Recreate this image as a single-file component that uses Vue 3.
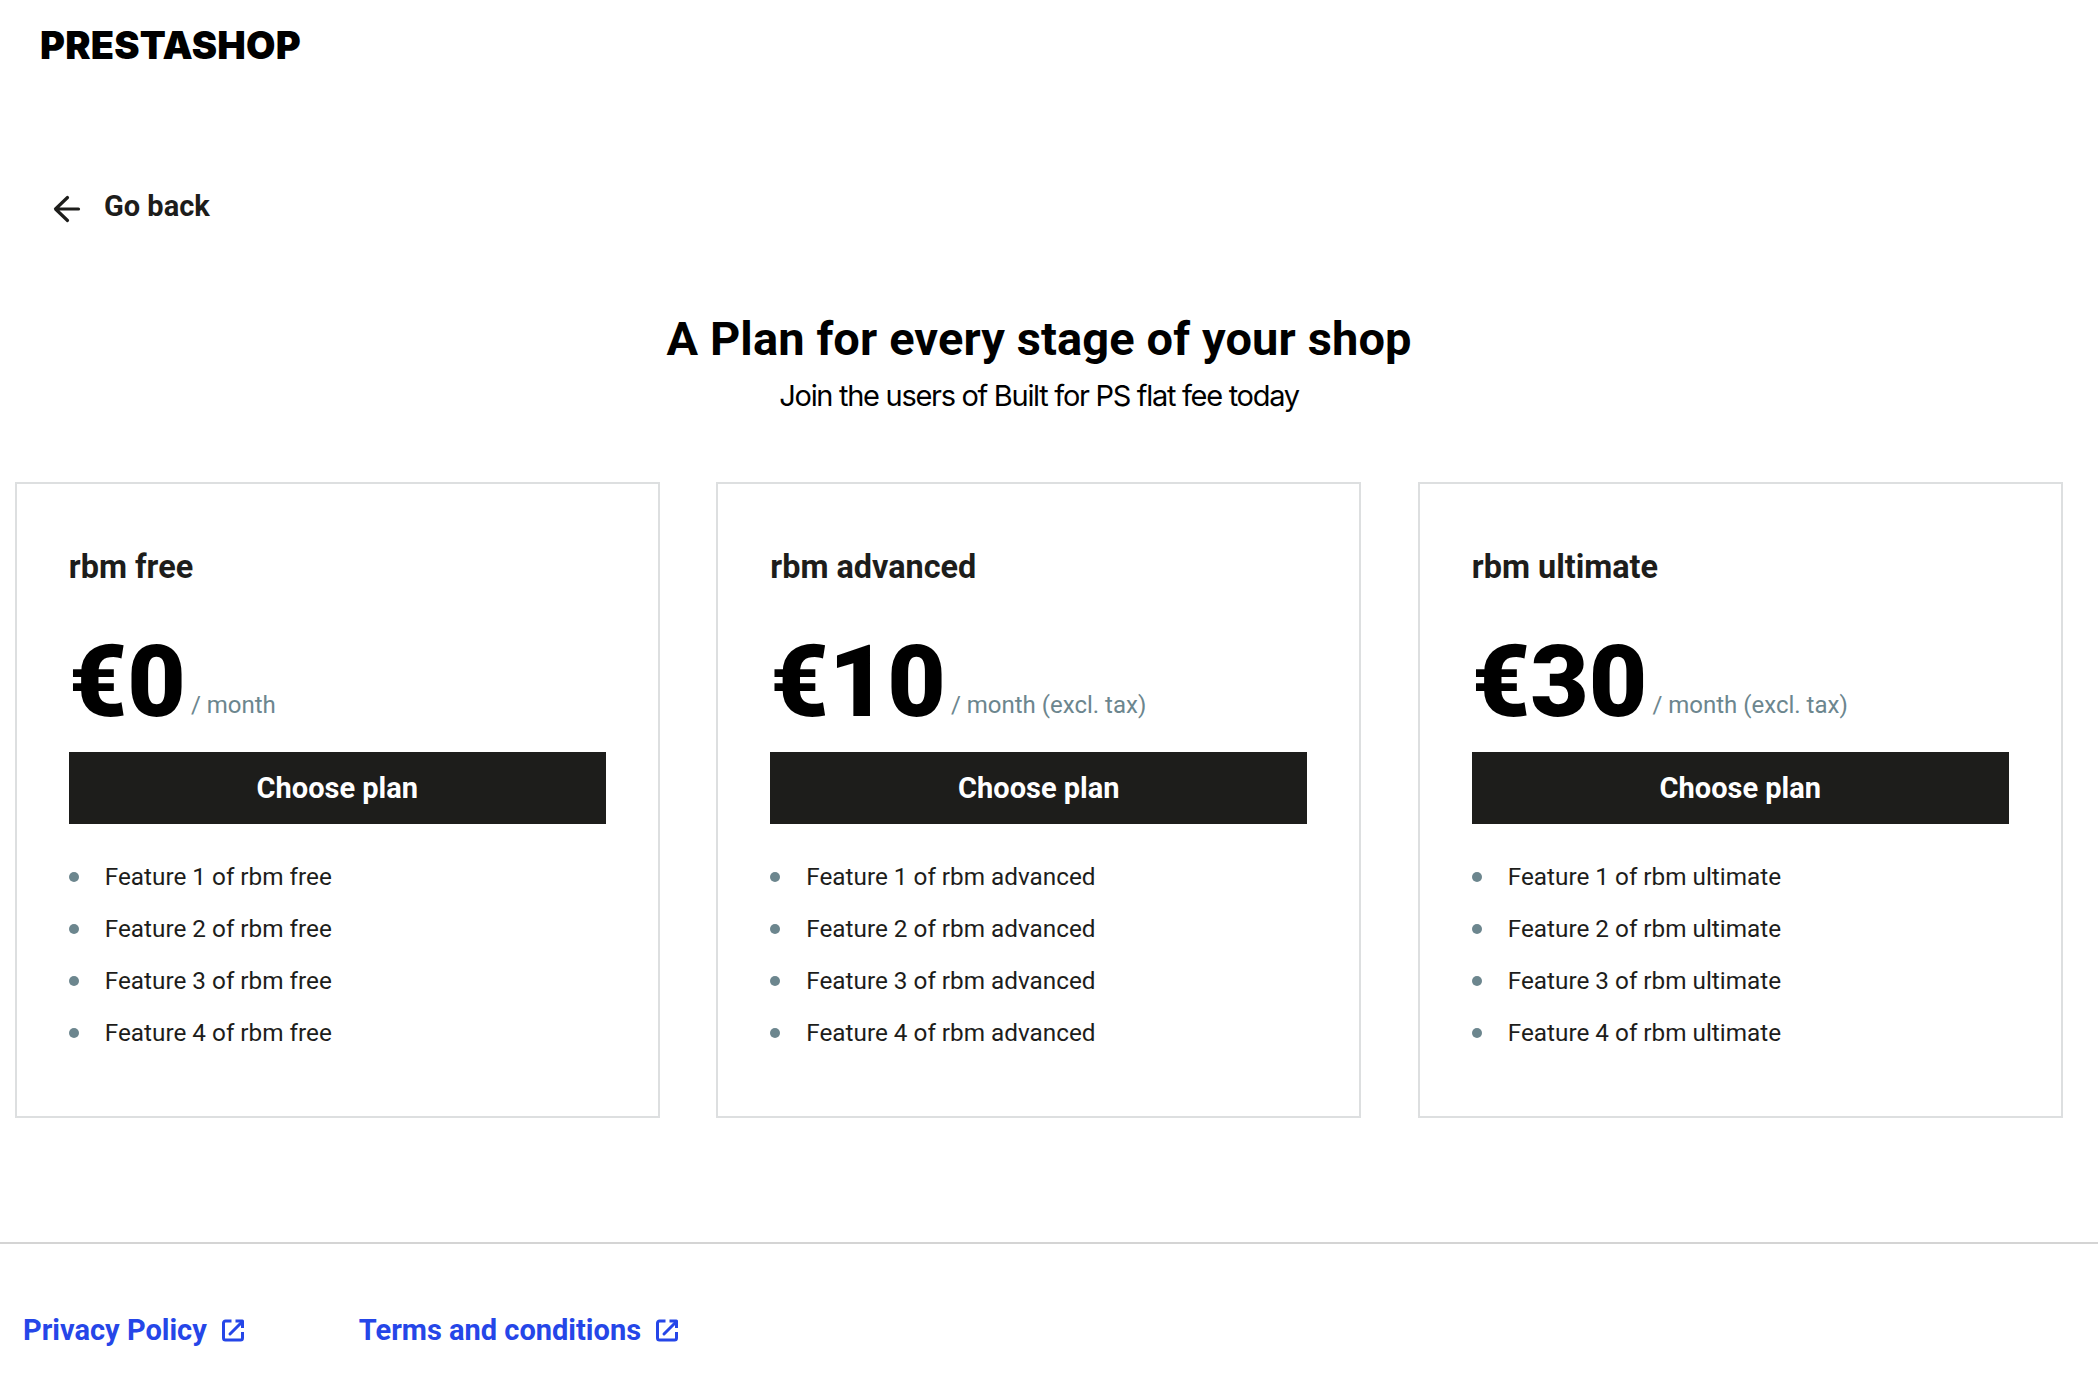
<script setup>
const plans = [
  { name: 'rbm free', price: '€0', period: '/ month' },
  { name: 'rbm advanced', price: '€10', period: '/ month (excl. tax)' },
  { name: 'rbm ultimate', price: '€30', period: '/ month (excl. tax)' }
]
const links = ['Privacy Policy', 'Terms and conditions']
</script>

<template>
  <div class="page">
    <header class="top">
      <span class="logo">PRESTASHOP</span>
    </header>

    <a class="back">
      <svg width="32" height="32" viewBox="0 0 32 32" fill="none" stroke="#1d1d1b" stroke-width="3.200" stroke-linecap="round" stroke-linejoin="round">
        <path d="M26.500 16H4M15.500 4.500L3.500 16l12 11.500" />
      </svg>
      <span>Go back</span>
    </a>

    <div class="intro">
      <h1>A Plan for every stage of your shop</h1>
      <p>Join the users of Built for PS flat fee today</p>
    </div>

    <section class="plans">
      <article v-for="plan in plans" :key="plan.name" class="card">
        <h2>{{ plan.name }}</h2>
        <div class="price">
          <strong>{{ plan.price }}</strong>
          <span>{{ plan.period }}</span>
        </div>
        <button class="choose">Choose plan</button>
        <ul>
          <li v-for="n in 4" :key="n">Feature {{ n }} of {{ plan.name }}</li>
        </ul>
      </article>
    </section>

    <footer>
      <a v-for="link in links" :key="link" class="link">
        <span>{{ link }}</span>
        <svg width="24" height="24" viewBox="0 0 24 24" fill="none" stroke="#2546e8" stroke-width="3" stroke-linejoin="round">
          <path d="M10.500 3H4.500a2 2 0 0 0-2 2v15a2 2 0 0 0 2 2h15a2 2 0 0 0 2-2v-6" />
          <path d="M9 16L20 5" stroke-linecap="round" />
          <path d="M14.500 3H21.500V10" />
        </svg>
      </a>
    </footer>
  </div>
</template>

<style>
html, body {
  margin: 0;
  background: #fff;
}
</style>

<style scoped>
.page {
  width: 2098px;
  height: 1378px;
  overflow: hidden;
  font-family: Roboto, "Liberation Sans", sans-serif;
  color: #1d1d1b;
}

.top {
  height: 90px;
  padding-left: 40px;
  display: flex;
  align-items: center;
}

.logo {
  font-family: Inter, sans-serif;
  font-weight: 900;
  font-size: 38px;
  letter-spacing: 0.2px;
  color: #000;
}

.back {
  margin: 96px 0 0 52px;
  display: flex;
  align-items: center;
  gap: 20px;
  font-size: 29px;
  font-weight: 700;
  height: 40px;
}

.back svg {
  margin-top: 6px;
}

.intro {
  margin: 83px 0 0 15px;
  width: 2048px;
  text-align: center;
}

h1 {
  margin: 0;
  font-size: 47px;
  line-height: 60px;
  font-weight: 700;
  letter-spacing: 0.12px;
  color: #000;
}

.intro p {
  margin: 2px 0 0;
  font-family: Inter, sans-serif;
  font-size: 29px;
  line-height: 50px;
  letter-spacing: -1.3px;
  color: #000;
}

.plans {
  margin: 61px 0 0 14.800px;
  width: 2048px;
  display: flex;
  justify-content: space-between;
}

.card {
  box-sizing: border-box;
  width: 645px;
  height: 636px;
  border: 2px solid #dddfe0;
  padding: 0 52px;
}

h2 {
  margin: 62px 0 0;
  font-size: 32.400px;
  line-height: 42px;
  font-weight: 700;
}

.price {
  margin-top: 40px;
  height: 108px;
  display: flex;
  align-items: flex-end;
  gap: 5px;
}

.price strong {
  font-size: 101px;
  line-height: 108px;
  font-weight: 900;
  color: #000;
}

.price span {
  font-size: 24px;
  line-height: 30px;
  margin-bottom: 16px;
  color: #6c868e;
}

.choose {
  display: block;
  width: 100%;
  height: 72px;
  margin-top: 16px;
  border: 0;
  background: #1d1d1b;
  color: #fff;
  font: 700 29px Roboto, sans-serif;
}

ul {
  list-style: none;
  margin: 27px 0 0;
  padding: 0;
}

li {
  height: 52px;
  line-height: 52px;
  padding-left: 36px;
  font-size: 24.300px;
  position: relative;
}

li::before {
  content: "";
  position: absolute;
  left: 0;
  top: 21px;
  width: 10px;
  height: 10px;
  border-radius: 50%;
  background: #6c868e;
}

footer {
  margin-top: 124px;
  border-top: 2px solid #d4d4d4;
  padding: 69px 0 0 23px;
  display: flex;
  gap: 114px;
}

.link {
  display: flex;
  align-items: center;
  gap: 14px;
  font-size: 29px;
  font-weight: 700;
  color: #2546e8;
}
</style>
